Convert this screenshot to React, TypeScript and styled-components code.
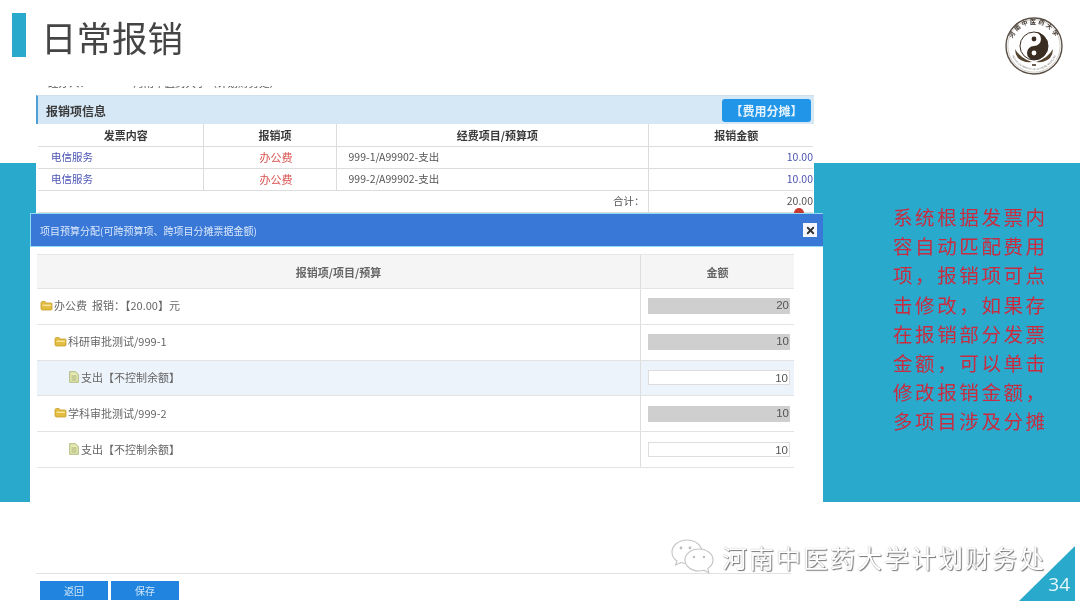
import React from 'react'
import styled, { createGlobalStyle } from 'styled-components'
import { X } from 'lucide-react'

const GlobalStyle = createGlobalStyle`
    html, body {
        margin: 0;
        padding: 0;
        background: #fff;
    }
    body {
        font-family: "Noto Sans CJK SC", "Liberation Sans", sans-serif;
    }
    * {
        box-sizing: border-box;
    }
`

const expenseRows = [
    { invoice: '电信服务', item: '办公费', project: '999-1/A99902-支出', amount: '10.00' },
    { invoice: '电信服务', item: '办公费', project: '999-2/A99902-支出', amount: '10.00' },
]

const budgetRows = [
    { level: 0, kind: 'folder', label: '办公费  报销：【20.00】元', value: '20', editable: false, active: false },
    { level: 1, kind: 'folder', label: '科研审批测试/999-1', value: '10', editable: false, active: false },
    { level: 2, kind: 'file', label: '支出【不控制余额】', value: '10', editable: true, active: true },
    { level: 1, kind: 'folder', label: '学科审批测试/999-2', value: '10', editable: false, active: false },
    { level: 2, kind: 'file', label: '支出【不控制余额】', value: '10', editable: true, active: false },
]

const noteText = '系统根据发票内容自动匹配费用项，报销项可点击修改，如果存在报销部分发票金额，可以单击修改报销金额，多项目涉及分摊'

const FolderIcon = () => (
    <svg width="13" height="11" viewBox="0 0 13 11">
        <path d="M1 3 Q1 1.5 2.5 1.5 H5 L6 3 H11 Q12 3 12 4 V9 Q12 10 11 10 H2.5 Q1 10 1 8.5 Z" fill="#e3bd3f" stroke="#c59d2c" strokeWidth="0.8" />
        <path d="M2.5 4.6 H11 V6 H2.5 Z" fill="#f6e6a0" />
    </svg>
)

const FileIcon = () => (
    <svg width="10" height="12" viewBox="0 0 10 12">
        <path d="M0.7 0.7 H6.5 L9.3 3.5 V11.3 H0.7 Z" fill="#e6e9b4" stroke="#a8b272" strokeWidth="0.9" />
        <path d="M2.5 5 H7.5 M2.5 7 H7.5 M2.5 9 H7.5" stroke="#8f9a5c" strokeWidth="0.7" />
    </svg>
)

const SchoolLogo = () => (
    <svg width="58" height="58" viewBox="0 0 58 58">
        <defs>
            <path id="ring-top" d="M7.8 37 A22.6 22.6 0 1 1 50.2 37" />
            <path id="ring-bottom" d="M5.5 34 A24 24 0 0 0 52.5 34" />
        </defs>
        <circle cx="29" cy="29" r="28" fill="#fff" stroke="#5b5148" strokeWidth="1.4" />
        <circle cx="29" cy="29" r="26.2" fill="none" stroke="#8d857b" strokeWidth="0.4" />
        <text fontSize="6" letterSpacing="1.9" fill="#3f362e" fontFamily="'Noto Sans CJK SC', serif" fontWeight="700">
            <textPath href="#ring-top" startOffset="50%" textAnchor="middle">河南中医药大学</textPath>
        </text>
        <text fontSize="2.6" fill="#77706a" fontFamily="'Liberation Sans', sans-serif">
            <textPath href="#ring-bottom" startOffset="50%" textAnchor="middle">HENAN UNIVERSITY OF CHINESE MEDICINE</textPath>
        </text>
        <path d="M10 32 Q15 41 27 45 Q18 46 13 41 Q10 37 10 32 Z M48 32 Q43 41 31 45 Q40 46 45 41 Q48 37 48 32 Z" fill="#54432f" />
        <circle cx="29" cy="29" r="14" fill="#fff" stroke="#3a2d22" strokeWidth="1" />
        <path d="M29 15 A14 14 0 0 1 29 43 A7 7 0 0 1 29 29 A7 7 0 0 0 29 15 Z" fill="#3a2d22" />
        <circle cx="29" cy="22" r="2.4" fill="#3a2d22" />
        <circle cx="29" cy="36" r="2.4" fill="#fff" />
        <path d="M27 47 H31 V49 H27 Z" fill="#6b5f52" />
    </svg>
)

const WechatMark = () => (
    <svg width="46" height="38" viewBox="0 0 46 38">
        <g fill="#fff" stroke="#c4c4c4" strokeWidth="1.1">
            <path d="M17 2 C8 2 2 8 2 14 C2 18 4 21 7 23 L5.5 27 L11 24.5 C13 25.2 15 25.5 17 25.5 C26 25.5 32 20 32 14 C32 8 26 2 17 2 Z" />
            <path d="M29 11 C21 11 15 16 15 22 C15 28 21 33 29 33 C31 33 32.5 32.7 34 32.2 L39 35 L37.8 30.6 C41 28.4 43 25.4 43 22 C43 16 37 11 29 11 Z" />
        </g>
        <g fill="#bdbdbd">
            <circle cx="11" cy="10" r="1.4" />
            <circle cx="20" cy="10" r="1.4" />
            <circle cx="24" cy="19" r="1.2" />
            <circle cx="34" cy="19" r="1.2" />
        </g>
    </svg>
)

export default function App() {
    return (
        <>
            <GlobalStyle />
            <Page>
                <Header>
                    <TitleGroup>
                        <TitleMark />
                        <Title>日常报销</Title>
                    </TitleGroup>
                    <SchoolLogo />
                </Header>
                <Body>
                    <MainColumn>
                        <ScreenPanel>
                            <ClippedLine>
                                <span>经办人：</span>
                                <span>河南中医药大学（计划财务处）</span>
                            </ClippedLine>
                            <SectionBar>
                                <SectionTitle>报销项信息</SectionTitle>
                                <ShareButton>【费用分摊】</ShareButton>
                            </SectionBar>
                            <ExpenseTable>
                                <colgroup>
                                    <col width="165" />
                                    <col width="133" />
                                    <col width="312" />
                                    <col width="165" />
                                </colgroup>
                                <thead>
                                    <tr>
                                        <ExpenseHead>发票内容</ExpenseHead>
                                        <ExpenseHead>报销项</ExpenseHead>
                                        <ExpenseHead>经费项目/预算项</ExpenseHead>
                                        <ExpenseHead>报销金额</ExpenseHead>
                                    </tr>
                                </thead>
                                <tbody>
                                    {expenseRows.map((row) => (
                                        <tr key={row.project}>
                                            <InvoiceCell>{row.invoice}</InvoiceCell>
                                            <ItemCell>{row.item}</ItemCell>
                                            <ProjectCell>{row.project}</ProjectCell>
                                            <AmountCell>{row.amount}</AmountCell>
                                        </tr>
                                    ))}
                                    <tr>
                                        <TotalLabel colSpan={3}>合计：</TotalLabel>
                                        <TotalCell>
                                            20.00
                                            <RedDot />
                                        </TotalCell>
                                    </tr>
                                </tbody>
                            </ExpenseTable>
                        </ScreenPanel>
                        <Modal>
                            <ModalHeader>
                                <ModalTitle>项目预算分配(可跨预算项、跨项目分摊票据金额)</ModalTitle>
                                <CloseButton>
                                    <X size={11} strokeWidth={4} color="#333" />
                                </CloseButton>
                            </ModalHeader>
                            <BudgetTable>
                                <BudgetHead>
                                    <BudgetHeadName>报销项/项目/预算</BudgetHeadName>
                                    <BudgetHeadValue>金额</BudgetHeadValue>
                                </BudgetHead>
                                {budgetRows.map((row, i) => (
                                    <BudgetRow key={i} $active={row.active}>
                                        <BudgetName $level={row.level}>
                                            {row.kind === 'folder' ? <FolderIcon /> : <FileIcon />}
                                            <BudgetLabel>{row.label}</BudgetLabel>
                                        </BudgetName>
                                        <BudgetValue>
                                            <ValueBox $editable={row.editable}>{row.value}</ValueBox>
                                        </BudgetValue>
                                    </BudgetRow>
                                ))}
                            </BudgetTable>
                        </Modal>
                        <Footer>
                            <FooterButton>返回</FooterButton>
                            <FooterButton>保存</FooterButton>
                        </Footer>
                    </MainColumn>
                    <Note>{noteText}</Note>
                </Body>
                <Watermark>
                    <WechatMark />
                    <WatermarkText>河南中医药大学计划财务处</WatermarkText>
                </Watermark>
                <PageCorner>
                    <PageNumber>34</PageNumber>
                </PageCorner>
            </Page>
        </>
    )
}

const Page = styled.div`
    position: relative;
    width: 1080px;
    height: 607px;
    overflow: hidden;
    filter: blur(0.4px);
    background: linear-gradient(#29a9cb, #29a9cb) 0 163px / 100% 339px no-repeat, #fff;
`

const Header = styled.header`
    height: 86px;
    display: flex;
    align-items: flex-start;
    justify-content: space-between;
    padding: 17px 17px 0 12px;
`

const TitleGroup = styled.div`
    display: flex;
    align-items: flex-start;
    gap: 16px;
    margin-top: -4px;
`

const TitleMark = styled.div`
    width: 14px;
    height: 44px;
    background: #29a9cb;
`

const Title = styled.h1`
    margin: 0 0 0 -1px;
    font-size: 35.5px;
    line-height: 48px;
    font-weight: 400;
    color: #454545;
`

const Body = styled.div`
    display: grid;
    grid-template-columns: 823px 1fr;
`

const MainColumn = styled.div`
    display: flex;
    flex-direction: column;
`

const ScreenPanel = styled.section`
    width: 778px;
    height: 127px;
    margin-left: 36px;
    padding-left: 2px;
    background: #fff;
    overflow: hidden;
`

const ClippedLine = styled.div`
    height: 9px;
    overflow: hidden;
    display: flex;
    gap: 43px;
    padding-left: 10px;
    font-size: 10.5px;
    line-height: 10px;
    color: #555;
    span {
        display: block;
        margin-top: -8px;
    }
`

const SectionBar = styled.div`
    height: 29px;
    display: flex;
    align-items: center;
    justify-content: space-between;
    padding: 0 3px 0 8px;
    background: #d6e8f6;
    border-left: 2px solid #4d9fd6;
    border-top: 1px solid #cfdfec;
    margin-left: -2px;
`

const SectionTitle = styled.h2`
    margin: 0;
    font-size: 12px;
    font-weight: 700;
    color: #3a3a3a;
`

const ShareButton = styled.button`
    width: 89px;
    height: 23px;
    padding: 0;
    border: 0;
    border-radius: 3px;
    background: #2196e8;
    color: #e4f2fc;
    font: 700 12px "Noto Sans CJK SC", sans-serif;
`

const ExpenseTable = styled.table`
    width: 775px;
    table-layout: fixed;
    border-collapse: collapse;
    font-size: 10.5px;
    tr {
        height: 22px;
    }
    td, th {
        padding: 0;
        border-right: 1px solid #dcdcdc;
        border-bottom: 1px solid #dcdcdc;
        line-height: 12px;
    }
    td:last-child, th:last-child {
        border-right: 0;
    }
`

const ExpenseHead = styled.th`
    padding-left: 11px !important;
    font-size: 11px;
    font-weight: 700;
    color: #3a3a3a;
`

const InvoiceCell = styled.td`
    padding-left: 13px !important;
    color: #4b54b4;
`

const ItemCell = styled.td`
    padding-left: 13px !important;
    text-align: center;
    font-size: 11px;
    color: #d8504c;
`

const ProjectCell = styled.td`
    padding-left: 12px !important;
    color: #555;
`

const AmountCell = styled.td`
    text-align: right;
    color: #4b54b4;
`

const TotalLabel = styled.td`
    text-align: right;
    padding-right: 3px !important;
    color: #555;
`

const TotalCell = styled.td`
    position: relative;
    text-align: right;
    color: #555;
`

const RedDot = styled.span`
    position: absolute;
    right: 9px;
    bottom: -6px;
    width: 10px;
    height: 10px;
    border-radius: 50%;
    background: #c83a32;
`

const Modal = styled.section`
    position: relative;
    width: 793px;
    height: 360px;
    margin-left: 30px;
    background: #fff;
`

const ModalHeader = styled.div`
    height: 34px;
    display: flex;
    align-items: center;
    justify-content: space-between;
    padding: 0 6px 0 9px;
    background: #3a78d8;
    border: 1px solid #8fdcf0;
    border-right: 0;
`

const ModalTitle = styled.span`
    font-size: 10px;
    color: #dbe8fa;
`

const CloseButton = styled.span`
    width: 14px;
    height: 14px;
    display: flex;
    align-items: center;
    justify-content: center;
    background: #f4f6fa;
`

const BudgetTable = styled.div`
    width: 757px;
    margin: 7px 0 0 7px;
    font-size: 11px;
    color: #666;
`

const BudgetHead = styled.div`
    height: 35px;
    display: grid;
    grid-template-columns: 604px 1fr;
    align-items: stretch;
    background: #f5f5f5;
    border-top: 1px solid #e6e6e6;
    border-bottom: 1px solid #e4e4e4;
    font-weight: 700;
`

const BudgetHeadName = styled.div`
    display: flex;
    align-items: center;
    justify-content: center;
    border-right: 1px solid #ddd;
`

const BudgetHeadValue = styled.div`
    display: flex;
    align-items: center;
    justify-content: center;
`

const BudgetRow = styled.div<{ $active: boolean }>`
    height: 35.8px;
    display: grid;
    grid-template-columns: 604px 1fr;
    background: ${(p) => (p.$active ? '#edf3fb' : '#fff')};
    border-bottom: 1px solid #e2e2e2;
`

const BudgetName = styled.div<{ $level: number }>`
    display: flex;
    align-items: center;
    gap: ${(p) => (p.$level === 2 ? 2 : 1)}px;
    padding: 0 0 2px ${(p) => 3 + p.$level * 14 + (p.$level === 2 ? 1 : 0)}px;
    border-right: 1px solid #ddd;
`

const BudgetLabel = styled.span`
    white-space: pre;
`

const BudgetValue = styled.div`
    display: flex;
    align-items: center;
    padding: 0 4px 0 7px;
`

const ValueBox = styled.div<{ $editable: boolean }>`
    width: 100%;
    height: ${(p) => (p.$editable ? 15 : 16)}px;
    padding-right: 1px;
    line-height: 15px;
    text-align: right;
    font-family: "Liberation Sans", sans-serif;
    font-size: 11.5px;
    color: #555;
    background: ${(p) => (p.$editable ? '#fff' : '#cfcfcf')};
    border: ${(p) => (p.$editable ? '1px solid #ddd' : '0')};
`

const Footer = styled.div`
    width: 755px;
    margin-left: 36px;
    padding: 7px 0 0 4px;
    display: flex;
    gap: 3px;
    border-top: 1px solid #e2e2e2;
`

const FooterButton = styled.button`
    width: 68px;
    height: 19px;
    padding: 0;
    border: 0;
    background: #2185e0;
    color: #cfe6fa;
    font: 400 10px "Noto Sans CJK SC", sans-serif;
`

const Note = styled.p`
    width: 158px;
    margin: 116px 0 0 70px;
    font-size: 19.5px;
    line-height: 29.2px;
    letter-spacing: 2.6px;
    color: #c92c40;
`

const Watermark = styled.div`
    position: absolute;
    left: 670px;
    top: 538px;
    display: flex;
    align-items: center;
    gap: 6px;
`

const WatermarkText = styled.span`
    font-size: 25px;
    line-height: 38px;
    letter-spacing: 2px;
    color: #fff;
    text-shadow: 1px 1px 1px #777, 0 0 1px #999;
`

const PageCorner = styled.div`
    position: absolute;
    left: 1019px;
    top: 546px;
    width: 56px;
    height: 55px;
    background: #29a9cb;
    clip-path: polygon(100% 0, 100% 100%, 0 100%);
`

const PageNumber = styled.span`
    position: absolute;
    right: 5px;
    bottom: 6px;
    font: 400 19px/22px "Open Sans", sans-serif;
    color: #e8f7fb;
`
